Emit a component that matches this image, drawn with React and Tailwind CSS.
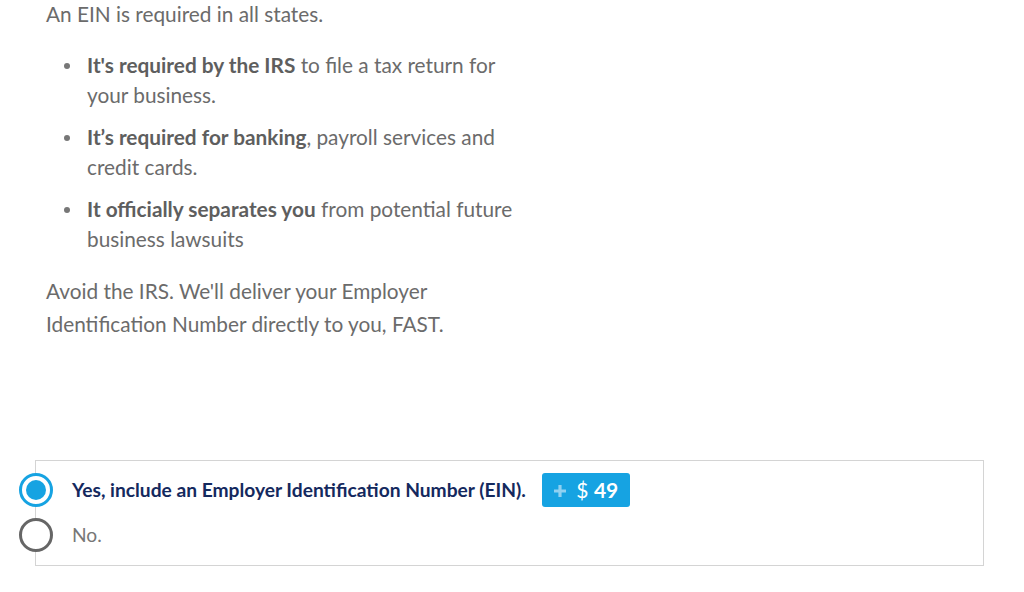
const FONT = { fontFamily: 'Lato, "Open Sans", sans-serif' }

const BULLETS = [
  { bold: "It's required by the IRS", rest: ' to file a tax return for your business.' },
  { bold: 'It\u2019s required for banking', rest: ', payroll services and credit cards.' },
  { bold: 'It officially separates you', rest: ' from potential future business lawsuits' },
]

function Radio({ checked }) {
  return checked ? (
    <span className="flex h-[34px] w-[34px] shrink-0 items-center justify-center rounded-full border-[3px] border-[#16a3e2] bg-white">
      <span className="h-[20px] w-[20px] rounded-full bg-[#16a3e2]" />
    </span>
  ) : (
    <span className="h-[34px] w-[34px] shrink-0 rounded-full border-[3px] border-[#666] bg-white" />
  )
}

export default function App() {
  return (
    <div className="h-[592px] w-[1024px] overflow-hidden bg-white" style={FONT}>
      <div className="pl-[46px] text-[20.8px] text-[#6b6b6b]">
        <p className="-mt-px leading-[30px]">An EIN is required in all states.</p>

        <ul className="mt-[21px] w-[490px] space-y-[12px]">
          {BULLETS.map((b) => (
            <li key={b.bold} className="flex leading-[30px]">
              <span className="mt-[13px] ml-[18px] mr-[17px] h-[6px] w-[6px] shrink-0 rounded-full bg-[#777]" />
              <span>
                <span className="font-bold text-[#5e5e5e]">{b.bold}</span>{b.rest}
              </span>
            </li>
          ))}
        </ul>

        <p className="mt-[20px] w-[430px] leading-[33px]">
          Avoid the IRS. We'll deliver your Employer Identification Number directly to you, FAST.
        </p>
      </div>

      <div className="ml-[35px] mt-[120px] h-[106px] w-[949px] border border-[#d4d4d4] pt-[12px]">
        <div className="-ml-[17px] flex flex-col gap-[11px]">
          <label className="flex h-[34px] items-center">
            <Radio checked />
            <span className="ml-[19px] text-[19.2px] font-bold text-[#14295e]">
              Yes, include an Employer Identification Number (EIN).
            </span>
            <span className="ml-[16px] flex h-[34px] w-[88px] items-center justify-center gap-[9px] rounded-[3px] bg-[#16a3e2] text-white">
              <svg width="14" height="14" viewBox="0 0 14 14" className="mt-px">
                <path d="M7 1v12M1 7h12" stroke="#8fd1f1" strokeWidth="3.2" />
              </svg>
              <span className="text-[21px]">$ <span className="font-bold">49</span></span>
            </span>
          </label>
          <label className="flex h-[34px] items-center">
            <Radio />
            <span className="ml-[19px] text-[19.2px] text-[#777]">No.</span>
          </label>
        </div>
      </div>
    </div>
  )
}
